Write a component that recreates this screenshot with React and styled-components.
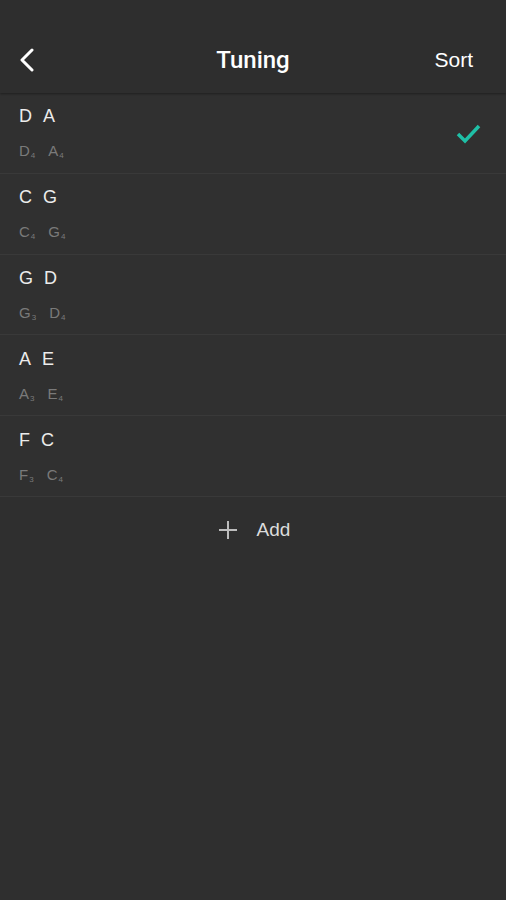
import styled, { createGlobalStyle } from "styled-components";

const GlobalStyle = createGlobalStyle`
  html, body {
    margin: 0;
    padding: 0;
    background: #2f2f2f;
    font-family: "Liberation Sans", Arial, sans-serif;
  }
`;

const tunings = [
  { notes: ["D", "A"], pitches: [["D", 4], ["A", 4]], selected: true },
  { notes: ["C", "G"], pitches: [["C", 4], ["G", 4]] },
  { notes: ["G", "D"], pitches: [["G", 3], ["D", 4]] },
  { notes: ["A", "E"], pitches: [["A", 3], ["E", 4]] },
  { notes: ["F", "C"], pitches: [["F", 3], ["C", 4]] },
];

const App = () => {
  return (
    <Page>
      <GlobalStyle />
      <Header>
        <BackButton>
          <svg width="16" height="24" viewBox="0 0 16 24">
            <path
              d="M13 2 L3 12 L13 22"
              fill="none"
              stroke="#fff"
              strokeWidth="3"
              strokeLinecap="round"
              strokeLinejoin="round"
            />
          </svg>
        </BackButton>
        <Title>Tuning</Title>
        <SortButton>Sort</SortButton>
      </Header>
      <List>
        {tunings.map((t, i) => (
          <Row key={i}>
            <RowText>
              <Notes>
                {t.notes.map((n) => (
                  <span key={n}>{n}</span>
                ))}
              </Notes>
              <Pitches>
                {t.pitches.map(([n, o]) => (
                  <span key={n}>
                    {n}
                    <sub>{o}</sub>
                  </span>
                ))}
              </Pitches>
            </RowText>
            {t.selected && (
              <Check width="26" height="22" viewBox="0 0 26 22">
                <path
                  d="M2 11 L9 18 L23 3"
                  fill="none"
                  stroke="#1fbfa6"
                  strokeWidth="3.5"
                  strokeLinejoin="miter"
                />
              </Check>
            )}
          </Row>
        ))}
      </List>
      <AddButton>
        <svg width="20" height="20" viewBox="0 0 20 20">
          <path d="M10 1 V19 M1 10 H19" stroke="#bdbdbd" strokeWidth="2" />
        </svg>
        <span>Add</span>
      </AddButton>
    </Page>
  );
};

const Page = styled.div`
  min-height: 900px;
  background: #2f2f2f;
  color: #f2f2f2;
`;

const Header = styled.div`
  height: 93px;
  box-sizing: border-box;
  padding: 26px 33px 0 19px;
  display: flex;
  align-items: center;
  justify-content: space-between;
  position: relative;
  background: #2e2e2e;
  box-shadow: 0 1px 2px rgba(0, 0, 0, 0.35);
  z-index: 1;
`;

const BackButton = styled.div`
  width: 20px;
  display: flex;
  align-items: center;
`;

const Title = styled.div`
  position: absolute;
  left: 0;
  right: 0;
  top: 26px;
  bottom: 0;
  display: flex;
  align-items: center;
  justify-content: center;
  font-family: Roboto, "Liberation Sans", sans-serif;
  font-size: 24px;
  font-weight: 500;
  color: #fff;
  pointer-events: none;
`;

const SortButton = styled.div`
  font-size: 21px;
  color: #fff;
`;

const List = styled.div`
  display: flex;
  flex-direction: column;
`;

const Row = styled.div`
  height: 80.8px;
  box-sizing: border-box;
  padding: 0 24px 0 19px;
  display: flex;
  align-items: center;
  justify-content: space-between;
  border-bottom: 1.5px solid #393939;
  background: #303030;
`;

const RowText = styled.div`
  display: flex;
  flex-direction: column;
  gap: 16px;
  padding-top: 6px;
`;

const Notes = styled.div`
  display: flex;
  gap: 11px;
  font-size: 18px;
  color: #ececec;
  line-height: 20px;
`;

const Pitches = styled.div`
  display: flex;
  gap: 13px;
  font-size: 15px;
  color: #7a7a7a;
  line-height: 18px;

  sub {
    font-size: 8px;
    vertical-align: -2px;
    margin-left: 1px;
  }
`;

const Check = styled.svg`
  margin-top: 2px;
`;

const AddButton = styled.div`
  display: flex;
  align-items: center;
  justify-content: center;
  gap: 19px;
  padding-top: 22px;
  font-size: 19px;
  color: #dcdcdc;
  margin-left: 2px;
`;

export default App;
